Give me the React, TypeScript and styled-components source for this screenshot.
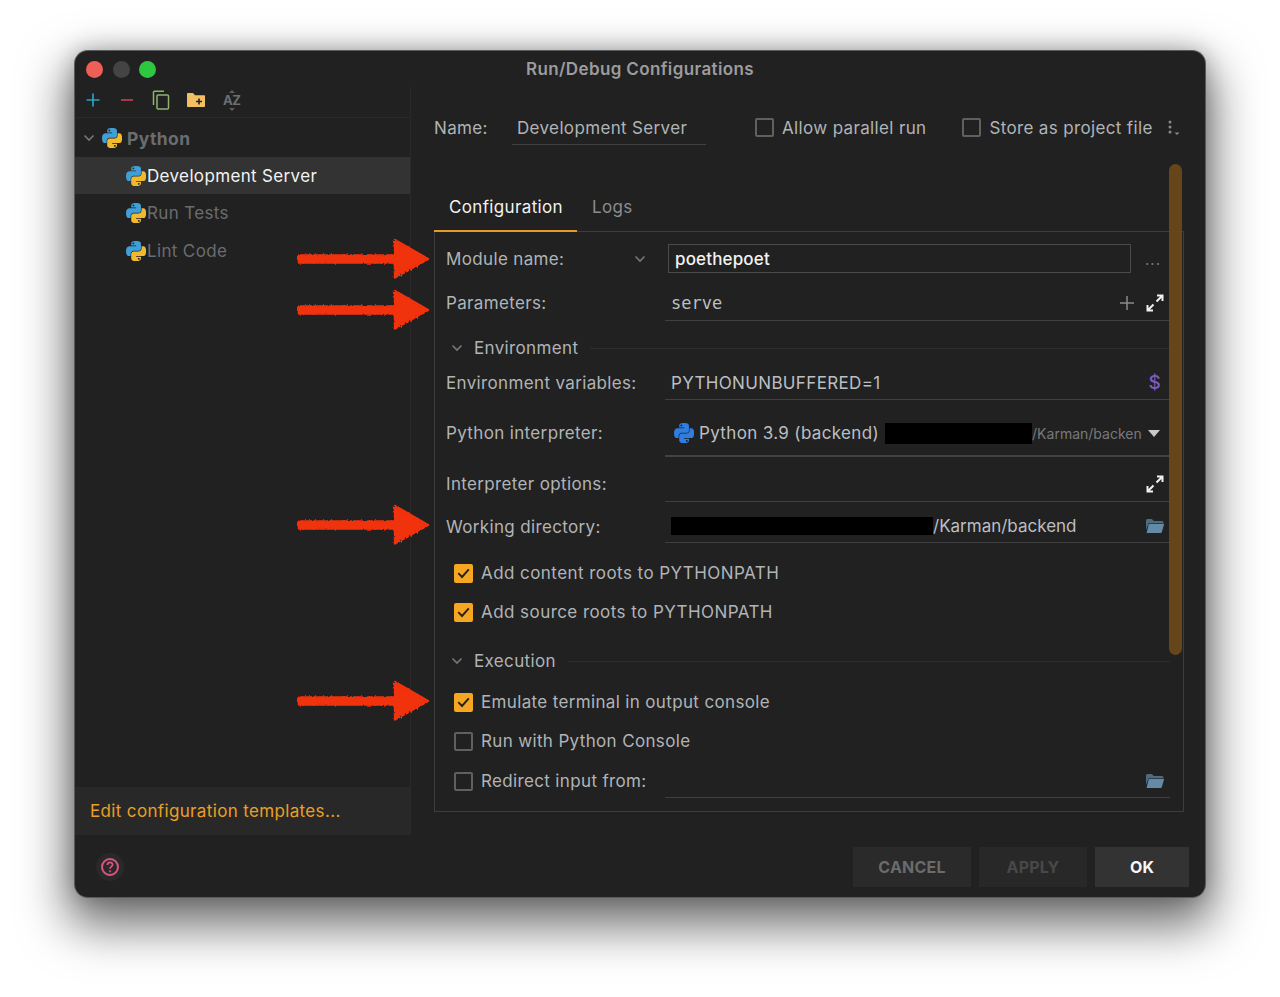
import React from "react";
import styled, { createGlobalStyle } from "styled-components";

const GlobalStyle = createGlobalStyle`
  html, body { margin: 0; padding: 0; background: #fff; }
  body { font-family: Inter, "Liberation Sans", sans-serif; }
`;

const Page = styled.div`
  width: 1280px;
  height: 997px;
  box-sizing: border-box;
  padding: 51px 75px 0;
  background: #fff;
  overflow: hidden;
`;

const Window = styled.div`
  position: relative;
  width: 1130px;
  height: 846px;
  display: flex;
  flex-direction: column;
  background: #212121;
  border-radius: 13px;
  box-shadow: 0 0 0 1px #5a5a5a, 0 22px 48px 8px rgba(0, 0, 0, 0.55), 0 0 22px rgba(0, 0, 0, 0.25);
  color: #b0b4b7;
  font-size: 17px;
  letter-spacing: 0.35px;
  white-space: nowrap;
`;

const TitleBar = styled.div`
  position: relative;
  height: 36px;
  flex: none;
  display: flex;
  align-items: center;
  justify-content: center;
`;

const Lights = styled.div`
  position: absolute;
  left: 11px;
  top: 10px;
  display: flex;
  gap: 9.5px;
`;

const Light = styled.span<{ $color: string }>`
  width: 17px;
  height: 17px;
  border-radius: 50%;
  background: ${(p) => p.$color};
`;

const Title = styled.div`
  font-size: 17px;
  font-weight: 600;
  letter-spacing: 0.38px;
  color: #9c9c9c;
`;

const Main = styled.div`
  flex: 1;
  min-height: 0;
  display: flex;
`;

const Sidebar = styled.aside`
  width: 336px;
  flex: none;
  display: flex;
  flex-direction: column;
  border-right: 1px solid #292929;
  box-sizing: border-box;
`;

const Toolbar = styled.div`
  height: 31px;
  box-sizing: border-box;
  flex: none;
  display: flex;
  align-items: center;
  padding: 0 0 4px 10px;
  border-bottom: 1px solid #292929;
  margin-bottom: 1px;
`;

const ToolIcon = styled.svg<{ $ml: number }>`
  flex: none;
  margin-left: ${(p) => p.$ml}px;
`;

const SortIcon = styled.span`
  position: relative;
  margin-left: 17px;
  font-size: 13px;
  font-weight: 700;
  letter-spacing: -0.4px;
  color: #6c6f72;
  line-height: 1;
  &::before,
  &::after {
    content: "";
    position: absolute;
    left: 6px;
    border-left: 3px solid transparent;
    border-right: 3px solid transparent;
  }
  &::before {
    top: -4px;
    border-bottom: 3px solid #5c5f62;
  }
  &::after {
    bottom: -4px;
    border-top: 3px solid #5c5f62;
  }
`;

const TreeRow = styled.div<{ $active?: boolean; $depth: number; $h: number }>`
  height: ${(p) => p.$h}px;
  flex: none;
  display: flex;
  align-items: center;
  gap: 1px;
  padding-left: ${(p) => p.$depth}px;
  background: ${(p) => (p.$active ? "#333333" : "transparent")};
  color: ${(p) => (p.$active ? "#f2f2f2" : "#6a6d70")};
`;

const GroupLabel = styled.span`
  font-size: 17.5px;
  font-weight: 700;
  letter-spacing: 0.4px;
  margin-left: 4px;
`;

const Chevron = styled.svg<{ $mr?: number }>`
  flex: none;
  width: 12px;
  height: 8px;
  margin-right: ${(p) => p.$mr ?? 0}px;
  fill: none;
  stroke: #777;
  stroke-width: 1.6;
`;

const TemplatesBand = styled.div`
  margin-top: auto;
  height: 48px;
  flex: none;
  display: flex;
  align-items: center;
  padding-left: 15px;
  background: #282828;
  color: #e9a024;
`;

const Content = styled.section`
  position: relative;
  flex: 1;
  padding: 23px 21px 0 23px;
`;

const NameRow = styled.div`
  height: 35px;
  display: flex;
  align-items: center;
`;

const NameLabel = styled.span`
  width: 78px;
  flex: none;
`;

const NameField = styled.div`
  width: 194px;
  height: 35px;
  box-sizing: border-box;
  flex: none;
  display: flex;
  align-items: center;
  padding: 1px 0 0 5px;
  border-bottom: 1px solid #404040;
`;

const RowCheck = styled.label<{ $ml: number }>`
  display: flex;
  align-items: center;
  gap: 8px;
  margin-left: ${(p) => p.$ml}px;
`;

const Box = styled.span<{ $on?: boolean }>`
  width: 19px;
  height: 19px;
  box-sizing: border-box;
  flex: none;
  border-radius: 2px;
  border: ${(p) => (p.$on ? "none" : "2px solid #606060")};
  background: ${(p) => (p.$on ? "#f5a623" : "transparent")};
  display: flex;
  align-items: center;
  justify-content: center;
`;

const TabBar = styled.div`
  margin-top: 40px;
  height: 47px;
  display: flex;
`;

const Tab = styled.div<{ $active?: boolean }>`
  position: relative;
  z-index: 1;
  box-sizing: border-box;
  padding: 0 14px 1px 15px;
  display: flex;
  align-items: center;
  font-size: 17px;
  color: ${(p) => (p.$active ? "#f2f2f2" : "#8a8d90")};
  border-bottom: 2px solid ${(p) => (p.$active ? "#e59a24" : "transparent")};
`;

const ConfigBox = styled.div`
  height: 581px;
  box-sizing: border-box;
  border: 1px solid #3d3d3d;
  padding: 0 13px 0 11px;
  margin-top: -1px;
`;

const Row = styled.div<{ $h: number; $mt: number }>`
  height: ${(p) => p.$h}px;
  margin-top: ${(p) => p.$mt}px;
  display: flex;
  align-items: center;
`;

const FieldLabel = styled.div<{ $check?: boolean }>`
  width: 219px;
  flex: none;
  box-sizing: border-box;
  display: flex;
  align-items: center;
  padding-left: ${(p) => (p.$check ? 8 : 0)}px;
  gap: ${(p) => (p.$check ? 8 : 0)}px;
`;

const LabelEnd = styled.span`
  margin-left: auto;
  display: flex;
`;

const Field = styled.div<{ $thick?: boolean }>`
  flex: 1;
  min-width: 0;
  align-self: stretch;
  box-sizing: border-box;
  display: flex;
  align-items: center;
  padding: ${(p) => (p.$thick ? 2 : 0)}px 0 0 6px;
  border-bottom: ${(p) => (p.$thick ? "2px solid #434343" : "1px solid #404040")};
  color: #bcbfc2;
`;

const ModuleInput = styled.div`
  width: 463px;
  height: 29px;
  margin-left: 3px;
  box-sizing: border-box;
  border: 1px solid #4b4b4b;
  display: flex;
  align-items: center;
  padding-left: 6px;
  color: #f2f2f2;
  font-weight: 500;
  letter-spacing: 0.15px;
`;

const Dots = styled.span`
  margin-left: 14px;
  margin-top: 2px;
  color: #777;
  font-size: 15px;
  letter-spacing: 1px;
`;

const MonoValue = styled.span`
  font-family: "DejaVu Sans Mono", monospace;
  font-size: 17px;
  letter-spacing: 0;
`;

const RightIcons = styled.div`
  margin-left: auto;
  display: flex;
  align-items: center;
  gap: 12px;
  padding-right: 5px;
`;

const Dollar = styled.span`
  font-weight: 500;
  color: #7f5cc0;
  font-size: 19px;
  margin-right: 4px;
`;

const PyName = styled.span`
  margin: 0 6px 0 5px;
`;

const PathTail = styled.span`
  letter-spacing: 0;
`;

const Muted = styled.span`
  font-size: 14px;
  color: #77797b;
  letter-spacing: 0;
`;

const IconGap = styled.span`
  width: 3px;
  flex: none;
`;

const Redacted = styled.span<{ $w: number; $h: number }>`
  display: inline-block;
  width: ${(p) => p.$w}px;
  height: ${(p) => p.$h}px;
  background: #000;
  flex: none;
`;

const Caret = styled.span`
  width: 0;
  height: 0;
  border-left: 6px solid transparent;
  border-right: 6px solid transparent;
  border-top: 7px solid #c9c9c9;
  margin: 0 5px 0 0;
`;

const SectionHead = styled.div<{ $mt: number }>`
  height: 34px;
  margin-top: ${(p) => p.$mt}px;
  display: flex;
  align-items: center;
  gap: 11px;
  padding-left: 5px;
  &::after {
    content: "";
    flex: 1;
    height: 1px;
    background: #2d2d2d;
    margin-left: 1px;
  }
`;

const CheckLine = styled.label<{ $mt: number; $wide?: boolean }>`
  height: 30px;
  margin-top: ${(p) => p.$mt}px;
  padding-left: 8px;
  display: flex;
  align-items: center;
  gap: 8px;
  letter-spacing: ${(p) => (p.$wide ? 0.44 : 0.35)}px;
`;

const ScrollThumb = styled.div`
  position: absolute;
  z-index: 2;
  left: 758px;
  top: 77px;
  width: 13px;
  height: 491px;
  border-radius: 7px;
  background: #6a4818;
  opacity: 0.95;
`;

const Footer = styled.footer`
  height: 62px;
  box-sizing: border-box;
  flex: none;
  display: flex;
  align-items: flex-start;
  padding: 12px 16px 0 21px;
  gap: 8px;
`;

const HelpBadge = styled.div`
  width: 28px;
  height: 28px;
  margin-top: 6px;
  border-radius: 50%;
  background: #292929;
  display: flex;
  align-items: center;
  justify-content: center;
  margin-right: auto;
`;

const Button = styled.div<{ $w: number; $bg: string; $fg: string }>`
  width: ${(p) => p.$w}px;
  height: 40px;
  display: flex;
  align-items: center;
  justify-content: center;
  background: ${(p) => p.$bg};
  color: ${(p) => p.$fg};
  font-size: 16px;
  font-weight: 700;
  letter-spacing: 0.2px;
`;

const ArrowMark = styled.svg<{ $top: number }>`
  position: absolute;
  z-index: 3;
  left: 220px;
  top: ${(p) => p.$top}px;
  width: 138px;
  height: 50px;
`;

const PySvg = styled.svg`
  flex: none;
`;

const ExpandSvg = styled.svg`
  margin-right: 1px;
`;

const FolderSvg = styled.svg`
  display: block;
`;

const KebabSvg = styled.svg`
  margin-left: 14px;
`;

function PythonIcon({ mono }: { mono?: boolean }) {
  return (
    <PySvg width="20" height="20" viewBox="0 0 110 110">
      <path
        fill={mono ? "#2f7de0" : "#3f9fd8"}
        d="M54.919 0c-4.584.022-8.961.413-12.813 1.095C30.76 3.099 28.7 7.295 28.7 15.032v10.219h26.813v3.406H18.638c-7.793 0-14.616 4.684-16.75 13.594-2.462 10.213-2.571 16.586 0 27.25 1.905 7.938 6.457 13.594 14.25 13.594h9.218v-12.25c0-8.85 7.657-16.656 16.75-16.656h26.782c7.454 0 13.406-6.138 13.406-13.625V15.032c0-7.266-6.13-12.725-13.406-13.937C64.282.328 59.502-.02 54.918 0zm-14.5 8.219c2.77 0 5.031 2.299 5.031 5.125 0 2.816-2.262 5.094-5.031 5.094-2.78 0-5.031-2.278-5.031-5.094 0-2.826 2.252-5.125 5.031-5.125z"
      />
      <path
        fill={mono ? "#2f7de0" : "#f0b92e"}
        d="M85.638 28.657v11.906c0 9.231-7.826 17-16.75 17H42.106c-7.336 0-13.406 6.278-13.406 13.625v25.531c0 7.266 6.319 11.54 13.406 13.625 8.488 2.496 16.627 2.947 26.782 0 6.75-1.954 13.406-5.888 13.406-13.625V86.501H55.513v-3.405H95.7c7.793 0 10.696-5.436 13.406-13.594 2.8-8.399 2.68-16.476 0-27.25-1.926-7.757-5.604-13.594-13.406-13.594H85.638zm-15.063 64.656c2.78 0 5.031 2.278 5.031 5.094 0 2.826-2.252 5.125-5.031 5.125-2.77 0-5.031-2.299-5.031-5.125 0-2.816 2.262-5.094 5.031-5.094z"
      />
    </PySvg>
  );
}

function ExpandIcon() {
  return (
    <ExpandSvg width="18" height="18" viewBox="0 0 18 18" fill="none" stroke="#f0f0f0" strokeWidth="2">
      <path d="M11 1.5h5.5V7M16.5 1.5l-6 6" />
      <path d="M7 16.5H1.5V11M1.5 16.5l6-6" />
    </ExpandSvg>
  );
}

function FolderIcon() {
  return (
    <FolderSvg width="20" height="16" viewBox="0 0 20 16">
      <path fill="#4f6b80" d="M1 2.5C1 1.7 1.7 1 2.5 1h4.3l2 2H17c.8 0 1.4.6 1.4 1.4V5H3.8L1 12z" />
      <path fill="#638aa6" d="M3.8 5.8h15.4l-2.4 8.4c-.1.5-.6.8-1.1.8H1.6z" />
    </FolderSvg>
  );
}

function DownChevron({ mr }: { mr?: number }) {
  return (
    <Chevron viewBox="0 0 12 8" $mr={mr}>
      <path d="M1.5 1.5 6 6l4.5-4.5" />
    </Chevron>
  );
}

function Check() {
  return (
    <svg width="13" height="11" viewBox="0 0 13 11" fill="none" stroke="#2a2115" strokeWidth="1.9">
      <path d="M1.3 5.2 5 9l6.8-7.6" />
    </svg>
  );
}

function Arrow({ top }: { top: number }) {
  return (
    <ArrowMark $top={top} viewBox="0 0 138 50">
      <defs>
        <filter id="rough" x="-5%" y="-10%" width="110%" height="120%">
          <feTurbulence type="fractalNoise" baseFrequency="0.5" numOctaves="2" seed="4" />
          <feDisplacementMap in="SourceGraphic" scale="3" />
        </filter>
      </defs>
      <path
        fill="#f0300f"
        stroke="#f0300f"
        strokeWidth="2.5"
        strokeLinejoin="round"
        filter="url(#rough)"
        d="M4 21.5h96V6l33 19-33 18.5V28.5H4z"
      />
    </ArrowMark>
  );
}

function App() {
  return (
    <Page>
      <GlobalStyle />
      <Window>
        <TitleBar>
          <Lights>
            <Light $color="#ee5f58" />
            <Light $color="#444444" />
            <Light $color="#2ec840" />
          </Lights>
          <Title>Run/Debug Configurations</Title>
        </TitleBar>

        <Main>
          <Sidebar>
            <Toolbar>
              <ToolIcon $ml={0} width="16" height="16" viewBox="0 0 16 16" stroke="#28a3c4" strokeWidth="1.7">
                <path d="M8 1.5v13M1.5 8h13" />
              </ToolIcon>
              <ToolIcon $ml={18} width="16" height="16" viewBox="0 0 16 16" stroke="#b8404f" strokeWidth="1.7">
                <path d="M2 8h12" />
              </ToolIcon>
              <ToolIcon $ml={17} width="18" height="20" viewBox="0 0 18 20" fill="none" stroke="#8db36c" strokeWidth="1.5">
                <rect x="5" y="5" width="11.5" height="14" rx="1" />
                <path d="M12 1.2H2.5a1 1 0 0 0-1 1V15" />
              </ToolIcon>
              <ToolIcon $ml={16} width="20" height="16" viewBox="0 0 20 16">
                <path fill="#f2c063" d="M1 2c0-.6.4-1 1-1h5l2 2.2h9c.6 0 1 .4 1 1V14c0 .6-.4 1-1 1H2c-.6 0-1-.4-1-1z" />
                <path stroke="#2b2416" strokeWidth="1.6" d="M13 6.5v6M10 9.5h6" />
              </ToolIcon>
              <SortIcon>AZ</SortIcon>
            </Toolbar>

            <TreeRow $h={38} $depth={8}>
              <DownChevron mr={6} />
              <PythonIcon />
              <GroupLabel>Python</GroupLabel>
            </TreeRow>
            <TreeRow $h={37} $depth={51} $active>
              <PythonIcon />
              Development Server
            </TreeRow>
            <TreeRow $h={38} $depth={51}>
              <PythonIcon />
              Run Tests
            </TreeRow>
            <TreeRow $h={38} $depth={51}>
              <PythonIcon />
              Lint Code
            </TreeRow>

            <TemplatesBand>Edit configuration templates...</TemplatesBand>
          </Sidebar>

          <Content>
            <NameRow>
              <NameLabel>Name:</NameLabel>
              <NameField>Development Server</NameField>
              <RowCheck $ml={49}>
                <Box />
                Allow parallel run
              </RowCheck>
              <RowCheck $ml={36}>
                <Box />
                Store as project file
              </RowCheck>
              <KebabSvg width="14" height="18" viewBox="0 0 14 18" fill="#8a8a8a">
                <circle cx="3" cy="3" r="1.5" />
                <circle cx="3" cy="8" r="1.5" />
                <circle cx="3" cy="13" r="1.5" />
                <path d="M7.5 13.5h5l-2.5 2.6z" />
              </KebabSvg>
            </NameRow>

            <TabBar>
              <Tab $active>Configuration</Tab>
              <Tab>Logs</Tab>
            </TabBar>

            <ConfigBox>
              <Row $h={29} $mt={12}>
                <FieldLabel>
                  Module name:
                  <LabelEnd>
                    <DownChevron mr={19} />
                  </LabelEnd>
                </FieldLabel>
                <ModuleInput>poethepoet</ModuleInput>
                <Dots>...</Dots>
              </Row>
              <Row $h={36} $mt={12}>
                <FieldLabel>Parameters:</FieldLabel>
                <Field>
                  <MonoValue>serve</MonoValue>
                  <RightIcons>
                    <svg width="14" height="14" viewBox="0 0 14 14" stroke="#8a8a8a" strokeWidth="1.5">
                      <path d="M7 0v14M0 7h14" />
                    </svg>
                    <ExpandIcon />
                  </RightIcons>
                </Field>
              </Row>

              <SectionHead $mt={10}>
                <DownChevron />
                Environment
              </SectionHead>
              <Row $h={34} $mt={1}>
                <FieldLabel>Environment variables:</FieldLabel>
                <Field>
                  PYTHONUNBUFFERED=1
                  <RightIcons>
                    <Dollar>$</Dollar>
                  </RightIcons>
                </Field>
              </Row>
              <Row $h={48} $mt={9}>
                <FieldLabel>Python interpreter:</FieldLabel>
                <Field $thick>
                  <IconGap />
                  <PythonIcon mono />
                  <PyName>Python 3.9 (backend)</PyName>
                  <Redacted $w={147} $h={21} />
                  <Muted>/Karman/backen</Muted>
                  <RightIcons>
                    <Caret />
                  </RightIcons>
                </Field>
              </Row>
              <Row $h={36} $mt={9}>
                <FieldLabel>Interpreter options:</FieldLabel>
                <Field>
                  <RightIcons>
                    <ExpandIcon />
                  </RightIcons>
                </Field>
              </Row>
              <Row $h={33} $mt={8}>
                <FieldLabel>Working directory:</FieldLabel>
                <Field>
                  <Redacted $w={262} $h={18} />
                  <PathTail>/Karman/backend</PathTail>
                  <RightIcons>
                    <FolderIcon />
                  </RightIcons>
                </Field>
              </Row>

              <CheckLine $mt={15} $wide>
                <Box $on>
                  <Check />
                </Box>
                Add content roots to PYTHONPATH
              </CheckLine>
              <CheckLine $mt={9} $wide>
                <Box $on>
                  <Check />
                </Box>
                Add source roots to PYTHONPATH
              </CheckLine>

              <SectionHead $mt={17}>
                <DownChevron />
                Execution
              </SectionHead>
              <CheckLine $mt={9}>
                <Box $on>
                  <Check />
                </Box>
                Emulate terminal in output console
              </CheckLine>
              <CheckLine $mt={9}>
                <Box />
                Run with Python Console
              </CheckLine>
              <Row $h={34} $mt={8}>
                <FieldLabel $check>
                  <Box />
                  Redirect input from:
                </FieldLabel>
                <Field>
                  <RightIcons>
                    <FolderIcon />
                  </RightIcons>
                </Field>
              </Row>
            </ConfigBox>

            <ScrollThumb />
          </Content>
        </Main>

        <Footer>
          <HelpBadge>
            <svg width="20" height="20" viewBox="0 0 20 20" fill="none" stroke="#dc5580" strokeWidth="2">
              <circle cx="10" cy="10" r="8" />
              <path strokeWidth="1.7" d="M7.4 8c0-3.4 5.2-3.4 5.2-.2 0 1.9-2.6 1.9-2.6 3.9" />
              <circle cx="10" cy="14.3" r="0.7" strokeWidth="1" />
            </svg>
          </HelpBadge>
          <Button $w={118} $bg="#2a2a2a" $fg="#6b6b6b">CANCEL</Button>
          <Button $w={108} $bg="#282828" $fg="#484848">APPLY</Button>
          <Button $w={94} $bg="#333333" $fg="#f7f7f7">OK</Button>
        </Footer>

        <Arrow top={183} />
        <Arrow top={234} />
        <Arrow top={449} />
        <Arrow top={625} />
      </Window>
    </Page>
  );
}

export default App;
